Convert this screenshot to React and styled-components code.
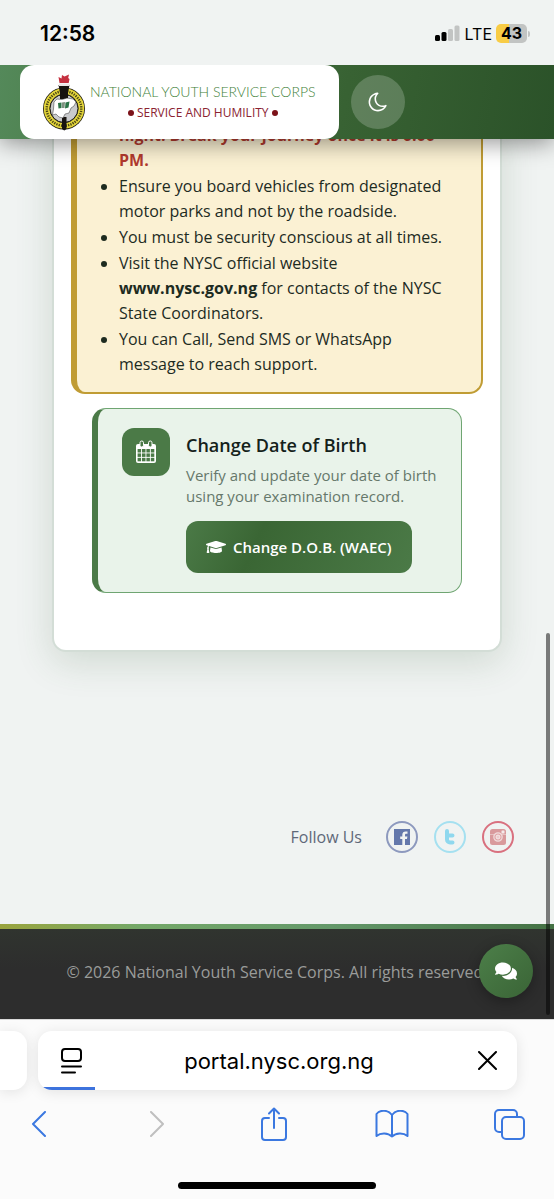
import styled, { createGlobalStyle } from 'styled-components';
import { FaComments, FaGraduationCap } from 'react-icons/fa';

const advice = [
  { id: 'night', alert: true, text: 'night. Break your journey once it is 6:00 PM.' },
  { id: 'board', text: 'Ensure you board vehicles from designated motor parks and not by the roadside.' },
  { id: 'security', text: 'You must be security conscious at all times.' },
  { id: 'website', text: 'Visit the NYSC official website ', site: 'www.nysc.gov.ng', after: ' for contacts of the NYSC State Coordinators.' },
  { id: 'support', text: 'You can Call, Send SMS or WhatsApp message to reach support.' },
];

// #region Styles

const GlobalStyle = createGlobalStyle`
  * {
    box-sizing: border-box;
  }
  body {
    margin: 0;
    background: #f0f3f2;
    color: #1d2b1f;
    font-family: 'Open Sans', 'Noto Sans', sans-serif;
  }
  button {
    border: 0;
    padding: 0;
    font-family: inherit;
    cursor: pointer;
  }
  svg {
    display: block;
    flex: none;
  }
`;

const Screen = styled.div`
  display: flex;
  flex-direction: column;
  height: 100vh;
  overflow: hidden;
`;

const StatusBar = styled.div`
  position: relative;
  z-index: 3;
  flex: none;
  display: flex;
  align-items: center;
  justify-content: space-between;
  height: 65px;
  padding: 2px 24px 0 40px;
  background: #f0f3f2;
  color: #000;
  font-family: Inter, sans-serif;
`;

const Clock = styled.time`
  font-size: 21px;
  font-weight: 600;
`;

const StatusIcons = styled.div`
  display: flex;
  align-items: center;
  gap: 4px;
  font-size: 16px;
`;

const Battery = styled.div`
  display: flex;
  align-items: center;
  gap: 1px;
`;

const BatteryLevel = styled.span`
  width: 31px;
  border-radius: 5px;
  background: linear-gradient(90deg, #f8cc46 ${(props) => props.$level}%, #c2c4c3 ${(props) => props.$level}%);
  font-weight: 700;
  line-height: 19px;
  text-align: center;
`;

const BatteryCap = styled.span`
  width: 2px;
  height: 6px;
  border-radius: 0 2px 2px 0;
  background: #c2c4c3;
`;

const SiteHeader = styled.header`
  position: relative;
  z-index: 2;
  flex: none;
  display: flex;
  align-items: center;
  gap: 12px;
  padding-left: 20px;
  background: linear-gradient(100deg, #54895a 0%, #4a7c47 20%, #386233 62%, #2b5229 100%);
  box-shadow: 0 4px 22px rgba(0, 0, 0, 0.42);
`;

const Brand = styled.a`
  display: flex;
  align-items: center;
  gap: 4px;
  width: 319px;
  height: 74px;
  padding: 0 22px;
  border-radius: 14px;
  background: #fff;
  text-decoration: none;
`;

const BrandText = styled.span`
  display: flex;
  flex-direction: column;
  align-items: center;
  gap: 1px;
  white-space: nowrap;
`;

const BrandName = styled.span`
  color: #3f8239;
  font-family: Lato, sans-serif;
  font-size: 14px;
  font-weight: 300;
  line-height: 20px;
`;

const Motto = styled.span`
  display: flex;
  align-items: center;
  gap: 3px;
  color: #8b2331;
  font-size: 12px;
  line-height: 20px;
  &::before,
  &::after {
    content: '';
    width: 6px;
    height: 6px;
    border-radius: 50%;
    background: #7c1219;
  }
`;

const ThemeButton = styled.button`
  display: grid;
  place-items: center;
  width: 54px;
  height: 54px;
  border-radius: 50%;
  background: rgba(255, 255, 255, 0.2);
  color: #fff;
`;

const Viewport = styled.div`
  position: relative;
  flex: 1;
  min-height: 0;
  display: flex;
  flex-direction: column;
  justify-content: flex-end;
  overflow: hidden;
`;

const Card = styled.main`
  flex: none;
  margin: 0 52px;
  padding: 0 17px 57px;
  border: 2px solid #d3ddd6;
  border-top: 0;
  border-radius: 0 0 14px 14px;
  background: #fff;
  box-shadow: 0 10px 36px rgba(60, 100, 62, 0.18);
`;

const Notice = styled.section`
  padding: 0 24px 15px 42px;
  border: 2px solid #c09c34;
  border-top: 0;
  border-left-width: 6px;
  border-radius: 0 0 14px 14px;
  background: #fbf1d3;
`;

const AdviceList = styled.ul`
  display: grid;
  gap: 1px;
  margin: 0;
  padding: 0;
  font-size: 16px;
  line-height: 25px;
`;

const AdviceItem = styled.li`
  color: ${(props) => (props.$alert ? '#b23a2e' : '#1d2b1f')};
  font-weight: ${(props) => (props.$alert ? 700 : 400)};
`;

const BirthPanel = styled.section`
  display: flex;
  align-items: flex-start;
  gap: 16px;
  margin: 14px 21px 0;
  padding: 19px 20px 19px 24px;
  border: 1px solid #6fa572;
  border-left: 6px solid #4b7a47;
  border-radius: 14px;
  background: #e9f3ea;
`;

const IconTile = styled.span`
  flex: none;
  display: grid;
  place-items: center;
  width: 48px;
  height: 48px;
  border-radius: 12px;
  background: #4b7a47;
`;

const BirthTitle = styled.h2`
  margin: 4px 0 7px;
  color: #14211a;
  font-size: 18px;
  font-weight: 600;
  line-height: 26px;
`;

const BirthText = styled.p`
  margin: 0 0 14px;
  color: #66786b;
  font-size: 15px;
  line-height: 21px;
`;

const PrimaryButton = styled.button`
  display: flex;
  align-items: center;
  gap: 7px;
  height: 52px;
  padding: 0 20px;
  border-radius: 12px;
  background: linear-gradient(115deg, #4b7a47 0%, #3a6634 32%, #4b7a47 100%);
  color: #fff;
  font-size: 15px;
  font-weight: 600;
  white-space: nowrap;
`;

const FollowRow = styled.nav`
  flex: none;
  display: flex;
  align-items: center;
  justify-content: flex-end;
  gap: 16px;
  margin: 169px 0 71px;
  padding-right: 40px;
`;

const FollowLabel = styled.span`
  margin-right: 8px;
  color: #5f6879;
  font-size: 16px;
`;

const SocialLink = styled.a`
  display: grid;
  place-items: center;
  width: 32px;
  height: 32px;
  border: 2px solid ${(props) => props.$ring};
  border-radius: 50%;
  color: ${(props) => props.$color};
`;

const Stripe = styled.div`
  flex: none;
  height: 5px;
  background: linear-gradient(90deg, #9aa43e 0%, #74a868 25%, #64986a 60%, #447144 100%);
`;

const SiteFooter = styled.footer`
  flex: none;
  padding: 32px 16px 36px;
  background: linear-gradient(180deg, #30342f 0%, #2d2d2d 45%);
  color: #9a9c9a;
  font-size: 16px;
  line-height: 22px;
  text-align: center;
  white-space: nowrap;
`;

const ChatButton = styled.button`
  position: absolute;
  right: 21px;
  bottom: 21px;
  display: grid;
  place-items: center;
  width: 54px;
  height: 54px;
  border-radius: 50%;
  background: linear-gradient(135deg, #4c7f49, #3a6436);
  box-shadow: 0 4px 14px rgba(0, 0, 0, 0.3);
  color: #fff;
`;

const ScrollThumb = styled.div`
  position: absolute;
  right: 4px;
  bottom: 4px;
  width: 4px;
  height: 382px;
  border-radius: 2px;
  background: rgba(0, 0, 0, 0.5);
`;

const BrowserBar = styled.div`
  flex: none;
  display: flex;
  flex-direction: column;
  padding: 11px 0 10px;
  border-top: 1px solid #d9d9d9;
  background: #fbfbfb;
`;

const TabStrip = styled.div`
  display: flex;
  gap: 11px;
  height: 59px;
  padding-right: 37px;
`;

const PreviousTab = styled.div`
  width: 27px;
  border-radius: 0 14px 14px 0;
  background: #fff;
  box-shadow: 0 2px 14px rgba(0, 0, 0, 0.1);
`;

const AddressBar = styled.div`
  position: relative;
  flex: 1;
  display: grid;
  grid-template-columns: 1fr auto 1fr;
  align-items: center;
  padding: 0 20px 0 23px;
  border-radius: 14px;
  background: #fff;
  box-shadow: 0 2px 14px rgba(0, 0, 0, 0.1);
  overflow: hidden;
`;

const Address = styled.span`
  color: #000;
  font-family: Inter, sans-serif;
  font-size: 22px;
`;

const LoadBar = styled.div`
  position: absolute;
  left: 0;
  bottom: 0;
  width: 12%;
  height: 3px;
  background: #3d73dd;
`;

const AddressButton = styled.button`
  justify-self: ${(props) => props.$side};
  background: none;
  color: #000;
`;

const Toolbar = styled.div`
  display: flex;
  align-items: center;
  justify-content: space-between;
  height: 68px;
  padding: 0 28px 0 22px;
`;

const ToolButton = styled.button`
  display: grid;
  place-items: center;
  width: 34px;
  height: 44px;
  background: none;
  color: ${(props) => (props.disabled ? '#bfbfbf' : '#3b78e0')};
`;

const HomeIndicator = styled.div`
  width: 198px;
  height: 7px;
  margin: 24px auto 0;
  border-radius: 4px;
  background: #000;
`;

// #endregion

function Signal() {
  return (
    <svg width="26" height="17" viewBox="0 0 26 17" aria-hidden="true">
      <rect x="0" y="10" width="5" height="6" rx="1.5" fill="#000" />
      <rect x="6.500" y="7" width="5" height="9" rx="1.5" fill="#000" />
      <rect x="13" y="4" width="5" height="12" rx="1.5" fill="#c2c4c3" />
      <rect x="19.500" y="0.5" width="5" height="15.500" rx="1.500" fill="#c2c4c3" />
    </svg>
  );
}

function Emblem() {
  return (
    <svg width="44" height="58" viewBox="0 0 44 58" aria-hidden="true">
      <circle cx="22" cy="35.500" r="21" fill="#1c1a10" />
      <circle cx="22" cy="35.500" r="17.300" fill="none" stroke="#e2d43b" strokeWidth="5.800" />
      <circle cx="22" cy="35.500" r="17.300" fill="none" stroke="#4a4514" strokeWidth="2.400" strokeDasharray="1.300 1.100" />
      <circle cx="22" cy="35.500" r="14" fill="#c9cacc" stroke="#1c1a10" strokeWidth="1" />
      <path d="M16.500 12h11l-1.500 8v6h-8v-6z" fill="#17130f" />
      <path d="M17 10.500h10.500v2.500H17z" fill="#ece6e6" />
      <path d="M17.500 10 16.500 4l3 1.500L20 2l2.500 1.500L27 1.500l-.8 3.500 1.300 1-.8 4z" fill="#c5303f" />
      <path d="M20 44h4.500v12l-2.200 1.500L20 56z" fill="#17130f" />
      <path d="m12 29 3-3 5 .5 5-1.500 6 1 3 3-2 4-3 2-2 5-4 1-2 4-4-1-3-3-3.500 1 1-6z" fill="#fff" stroke="#333" strokeWidth=".5" />
      <path d="m16 30 3.500-.5v5.500l-3 .5zm7.500-.5 4-1-1 6-3.500 1z" fill="#2b7447" />
      <path d="m20 29.500 3-.5-.5 6h-2.500z" fill="#7d907f" />
    </svg>
  );
}

function MoonIcon() {
  return (
    <svg width="22" height="22" viewBox="0 0 1792 1792" fill="currentColor" aria-hidden="true">
      <path d="M1390 1303q-54 9-110 9-182 0-337-90t-245-245-90-337q0-192 104-357-201 60-328.500 229t-127.500 384q0 130 51 248.500t136.500 204 204 136.500 248.500 51q144 0 273.500-61.500t220.500-171.500zm203-85q-94 203-283.500 324.500t-413.500 121.500q-156 0-298-61t-245-164-164-245-61-298q0-153 57.500-292.500t156-241.500 235.500-164.500 290-68.500q44-2 61 39 18 41-15 72-86 78-131.500 181.500t-45.500 218.500q0 148 73 273t198 198 273 73q118 0 228-51 41-18 72 13 14 14 17.500 34t-4.500 38z" />
    </svg>
  );
}

function CalendarIcon() {
  const steps = [0, 1, 2, 3];
  return (
    <svg width="22" height="24" viewBox="0 0 22 24" aria-hidden="true">
      <rect x="1" y="4" width="20" height="19" rx="2" fill="#fff" />
      <rect x="5" y="1" width="3.500" height="6" rx="1.700" fill="#4b7a47" stroke="#fff" />
      <rect x="13.500" y="1" width="3.500" height="6" rx="1.700" fill="#4b7a47" stroke="#fff" />
      {steps.map((col) => steps.slice(0, 3).map((row) => (
        <rect key={`${col}-${row}`} x={2.6 + col * 4.4} y={9 + row * 4.4} width="3.500" height="3.500" fill="#4b7a47" />
      )))}
    </svg>
  );
}

function FacebookIcon() {
  return (
    <svg width="16" height="16" viewBox="0 0 16 16" aria-hidden="true">
      <path fill="currentColor" d="M0 0h16v16h-5v-6h2l.4-2.500H11V6c0-.8.4-1.200 1.200-1.200h1.300V2.600C13 2.500 12.500 2.400 11.700 2.400 9.600 2.400 8.300 3.600 8.300 5.700v1.800H6.200V10h2.100v6H0z" />
    </svg>
  );
}

function TwitterIcon() {
  return (
    <svg width="16" height="16" viewBox="0 0 16 16" aria-hidden="true">
      <path d="M5 2v8.500a3 3 0 0 0 3 3h2.500M5 6.500h5.500" fill="none" stroke="currentColor" strokeWidth="4" strokeLinecap="round" strokeLinejoin="round" />
    </svg>
  );
}

function InstagramIcon() {
  return (
    <svg width="16" height="16" viewBox="0 0 16 16" aria-hidden="true">
      <rect width="16" height="16" rx="2.500" fill="currentColor" />
      <path d="M0 5.500h4M12 5.500h4" stroke="#e6c0c0" />
      <circle cx="8" cy="8" r="4.200" fill="#e0a5a6" stroke="#f0dcdc" strokeWidth="1.200" />
      <circle cx="8" cy="8" r="2" fill="#eccccc" stroke="#f5eaea" />
      <rect x="11.500" y="1.500" width="3" height="3" rx=".6" fill="#f5eaea" />
    </svg>
  );
}

function LineIcon({ width, height, stroke = 2, children }) {
  return (
    <svg width={width} height={height} viewBox={`0 0 ${width} ${height}`} fill="none" stroke="currentColor" strokeWidth={stroke} strokeLinecap="round" strokeLinejoin="round" aria-hidden="true">
      {children}
    </svg>
  );
}

export default function App() {
  return (
    <>
      <GlobalStyle />
      <Screen>
        <StatusBar>
          <Clock>12:58</Clock>
          <StatusIcons>
            <Signal />
            <span>LTE</span>
            <Battery>
              <BatteryLevel $level={43}>43</BatteryLevel>
              <BatteryCap />
            </Battery>
          </StatusIcons>
        </StatusBar>

        <SiteHeader>
          <Brand href="#home">
            <Emblem />
            <BrandText>
              <BrandName>NATIONAL YOUTH SERVICE CORPS</BrandName>
              <Motto>SERVICE AND HUMILITY</Motto>
            </BrandText>
          </Brand>
          <ThemeButton aria-label="Switch to dark theme">
            <MoonIcon />
          </ThemeButton>
        </SiteHeader>

        <Viewport>
          <Card>
            <Notice>
              <AdviceList>
                {advice.map((item) => (
                  <AdviceItem key={item.id} $alert={item.alert}>
                    {item.text}
                    {item.site && <strong>{item.site}</strong>}
                    {item.after}
                  </AdviceItem>
                ))}
              </AdviceList>
            </Notice>
            <BirthPanel>
              <IconTile>
                <CalendarIcon />
              </IconTile>
              <div>
                <BirthTitle>Change Date of Birth</BirthTitle>
                <BirthText>Verify and update your date of birth using your examination record.</BirthText>
                <PrimaryButton>
                  <FaGraduationCap size={20} aria-hidden="true" />
                  Change D.O.B. (WAEC)
                </PrimaryButton>
              </div>
            </BirthPanel>
          </Card>

          <FollowRow>
            <FollowLabel>Follow Us</FollowLabel>
            <SocialLink href="#facebook" aria-label="Facebook" $ring="#8d99be" $color="#6478ab">
              <FacebookIcon />
            </SocialLink>
            <SocialLink href="#twitter" aria-label="Twitter" $ring="#a5e0f0" $color="#8fd8ee">
              <TwitterIcon />
            </SocialLink>
            <SocialLink href="#instagram" aria-label="Instagram" $ring="#d9707f" $color="#d99a9c">
              <InstagramIcon />
            </SocialLink>
          </FollowRow>

          <Stripe />
          <SiteFooter>© 2026 National Youth Service Corps. All rights reserved.</SiteFooter>
          <ChatButton aria-label="Open chat">
            <FaComments size={22} />
          </ChatButton>
          <ScrollThumb />
        </Viewport>

        <BrowserBar>
          <TabStrip>
            <PreviousTab />
            <AddressBar>
              <AddressButton $side="start" aria-label="Page settings">
                <LineIcon width={21} height={26}>
                  <rect x="1" y="1" width="19" height="12" rx="3" />
                  <path d="M1 18.500h19M1 24.500h13" />
                </LineIcon>
              </AddressButton>
              <Address>portal.nysc.org.ng</Address>
              <AddressButton $side="end" aria-label="Stop loading">
                <LineIcon width={19} height={19}>
                  <path d="m1 1 17 17M18 1 1 18" />
                </LineIcon>
              </AddressButton>
              <LoadBar />
            </AddressBar>
          </TabStrip>
          <Toolbar>
            <ToolButton aria-label="Back">
              <LineIcon width={24} height={26}>
                <path d="M18 1 6 13l12 12" />
              </LineIcon>
            </ToolButton>
            <ToolButton aria-label="Forward" disabled>
              <LineIcon width={24} height={26}>
                <path d="m6 1 12 12L6 25" />
              </LineIcon>
            </ToolButton>
            <ToolButton aria-label="Share">
              <LineIcon width={26} height={34}>
                <path d="M8 11H4a3 3 0 0 0-3 3v16a3 3 0 0 0 3 3h18a3 3 0 0 0 3-3V14a3 3 0 0 0-3-3h-4M13 21V2M8 6.500 13 1.500l5 5" />
              </LineIcon>
            </ToolButton>
            <ToolButton aria-label="Bookmarks">
              <LineIcon width={34} height={28}>
                <path d="M17 5C13-.5 5-.5 1.500 4v22c4-3.500 11.500-3.500 15.500.5 4-4 11.500-4 15.500-.5V4C29-.5 21-.5 17 5zv21.500" />
              </LineIcon>
            </ToolButton>
            <ToolButton aria-label="Tabs">
              <LineIcon width={31} height={31}>
                <rect x="8" y="8" width="22" height="22" rx="4" />
                <path d="M8 23H5a4 4 0 0 1-4-4V5a4 4 0 0 1 4-4h14a4 4 0 0 1 4 4v3" />
              </LineIcon>
            </ToolButton>
          </Toolbar>
          <HomeIndicator />
        </BrowserBar>
      </Screen>
    </>
  );
}
